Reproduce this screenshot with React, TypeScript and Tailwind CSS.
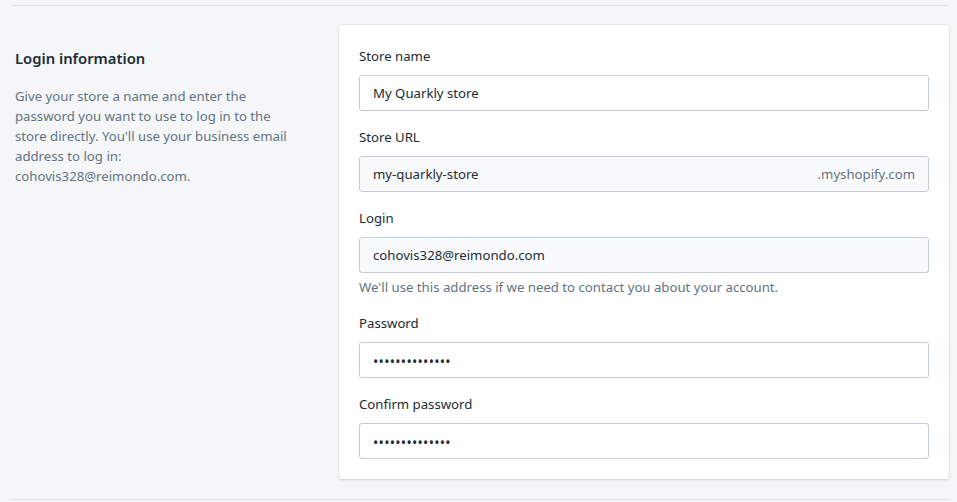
import React from "react";

const font = { fontFamily: '"Noto Sans", "Open Sans", sans-serif' };

function Label({ children }: { children: React.ReactNode }) {
  return <div className="text-[13.2px] leading-5 text-[#212b36] pt-[1px] mb-[9px]">{children}</div>;
}

function Field({
  label,
  value,
  gray,
  suffix,
  password,
}: {
  label: string;
  value: string;
  gray?: boolean;
  suffix?: string;
  password?: boolean;
}) {
  return (
    <div>
      <Label>{label}</Label>
      <div
        className={`h-9 flex items-center px-[13px] pt-[2px] rounded-[3px] border border-[#c4cdd5] ${
          gray ? "bg-[#f9fafb]" : "bg-white"
        }`}
      >
        <div className={`flex-1 text-[13.2px] text-[#212b36] ${password ? "text-[14px] tracking-[0.3px]" : ""}`}>
          {value}
        </div>
        {suffix && <div className="text-[13.2px] text-[#637381]">{suffix}</div>}
      </div>
    </div>
  );
}

export default function App() {
  return (
    <div className="w-[957px] h-[502px] bg-[#f4f6f8] overflow-hidden" style={font}>
      <div className="pt-[5px] pl-[11px] w-[949px]">
        <div className="border-t border-[#dfe3e8] flex pt-[19px]">
          <div className="w-[328px] pl-[4px] pr-[30px] pt-[21px]">
            <h2 className="text-[14.8px] leading-6 font-semibold text-[#212b36]">Login information</h2>
            <p className="mt-[16px] text-[13.2px] leading-5 text-[#637381] w-[285px]">
              Give your store a name and enter the password you want to use to log in to the store directly. You'll
              use your business email address to log in: cohovis328@reimondo.com.
            </p>
          </div>
          <div className="w-[610px] bg-white rounded-[3px] p-5 shadow-[0_0_0_1px_rgba(63,63,68,0.05),0_1px_3px_0_rgba(63,63,68,0.15)] flex flex-col gap-[15px]">
            <Field label="Store name" value="My Quarkly store" />
            <Field label="Store URL" value="my-quarkly-store" gray suffix=".myshopify.com" />
            <div>
              <Field label="Login" value="cohovis328@reimondo.com" gray />
              <div className="mt-1 text-[13.2px] leading-5 text-[#637381]">
                We'll use this address if we need to contact you about your account.
              </div>
            </div>
            <Field label="Password" value="••••••••••••••" password />
            <Field label="Confirm password" value="••••••••••••••" password />
          </div>
        </div>
        <div className="mt-5 border-t border-[#dfe3e8]" />
      </div>
    </div>
  );
}
